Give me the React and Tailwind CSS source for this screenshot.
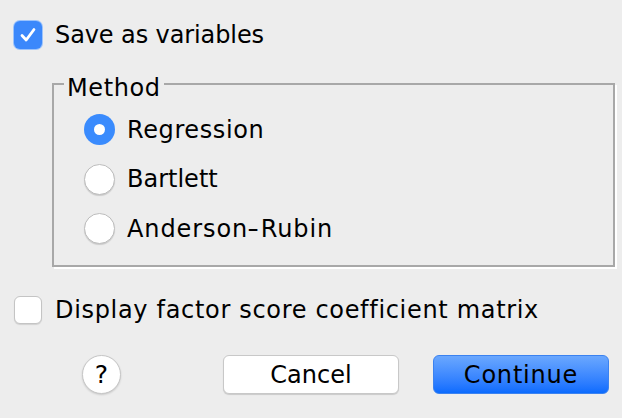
import React from "react";

function CheckBox({ checked }) {
  if (checked) {
    return (
      <div className="w-[30px] h-[30px] rounded-[7px] bg-[#9cc3fb] p-[1px] shrink-0">
        <div className="w-full h-full rounded-[6px] bg-[#3b88fb] flex items-center justify-center">
          <svg width="20" height="20" viewBox="0 0 20 20">
            <path d="M4 10.5 L8.2 15 L16 4.5" fill="none" stroke="#fff" strokeWidth="2.8" strokeLinecap="round" strokeLinejoin="round" />
          </svg>
        </div>
      </div>
    );
  }
  return (
    <div className="w-[28px] h-[28px] rounded-[6px] bg-white border border-[#c4c4c4] shadow-[0_1px_1px_rgba(0,0,0,0.12)] shrink-0" />
  );
}

function Radio({ checked }) {
  if (checked) {
    return (
      <div className="w-[31px] h-[31px] rounded-full bg-[#3a8bfd] flex items-center justify-center shrink-0">
        <div className="w-[11px] h-[11px] rounded-full bg-white" />
      </div>
    );
  }
  return (
    <div className="w-[31px] h-[31px] rounded-full bg-white border border-[#bdbdbd] shadow-[0_1px_1px_rgba(0,0,0,0.15)] shrink-0" />
  );
}

export default function App() {
  const font = { fontFamily: '"DejaVu Sans", "Liberation Sans", sans-serif' };
  return (
    <div className="w-[622px] h-[418px] bg-[#ededed] text-black overflow-hidden" style={font}>
      <div className="flex flex-col pt-[20px]">
        <div className="flex items-center pl-[13px] gap-[12px] h-[30px]">
          <CheckBox checked />
          <span className="text-[24px] leading-none tracking-[-0.1px]">Save as variables</span>
        </div>

        <div className="relative ml-[52px] mt-[33px] w-[563px] h-[184px] border-2 border-[#a8a8a8] shadow-[2px_2px_0_#ffffff]">
          <span className="absolute left-[10px] top-[-10px] px-[3px] bg-[#ededed] text-[24px] leading-[26px] tracking-[0.6px]">Method</span>
          <div className="flex flex-col gap-[18.5px] pl-[30px] pt-[29px]">
            <div className="flex items-center gap-[12px] h-[31px]">
              <Radio checked />
              <span className="text-[24px] leading-none tracking-[0.6px]">Regression</span>
            </div>
            <div className="flex items-center gap-[12px] h-[31px]">
              <Radio />
              <span className="text-[24px] leading-none">Bartlett</span>
            </div>
            <div className="flex items-center gap-[12px] h-[31px]">
              <Radio />
              <span className="text-[24px] leading-none tracking-[0.9px]">Anderson<span className="inline-block ml-[1px] mr-[2px] scale-x-[1.35]">-</span>Rubin</span>
            </div>
          </div>
        </div>

        <div className="flex items-center pl-[14px] gap-[13px] h-[28px] mt-[29px]">
          <CheckBox />
          <span className="text-[24px] leading-none tracking-[0.68px]">Display factor score coefficient matrix</span>
        </div>

        <div className="flex items-center mt-[31px] h-[39px]">
          <div className="ml-[82px] w-[39px] h-[39px] rounded-full bg-white border border-[#c6c6c6] shadow-[0_1px_2px_rgba(0,0,0,0.15)] flex items-center justify-center text-[25px] leading-none">?</div>
          <div className="ml-[102px] w-[176px] h-[39px] rounded-[6px] bg-white border border-[#c8c8c8] shadow-[0_1px_1px_rgba(0,0,0,0.15)] flex items-center justify-center text-[24px] leading-none">Cancel</div>
          <div className="ml-[34px] w-[176px] h-[39px] rounded-[6px] bg-gradient-to-b from-[#6aa7fe] to-[#0a6bfe] border border-[#3b82f0] flex items-center justify-center text-[24px] leading-none tracking-[0.8px]">Continue</div>
        </div>
      </div>
    </div>
  );
}
